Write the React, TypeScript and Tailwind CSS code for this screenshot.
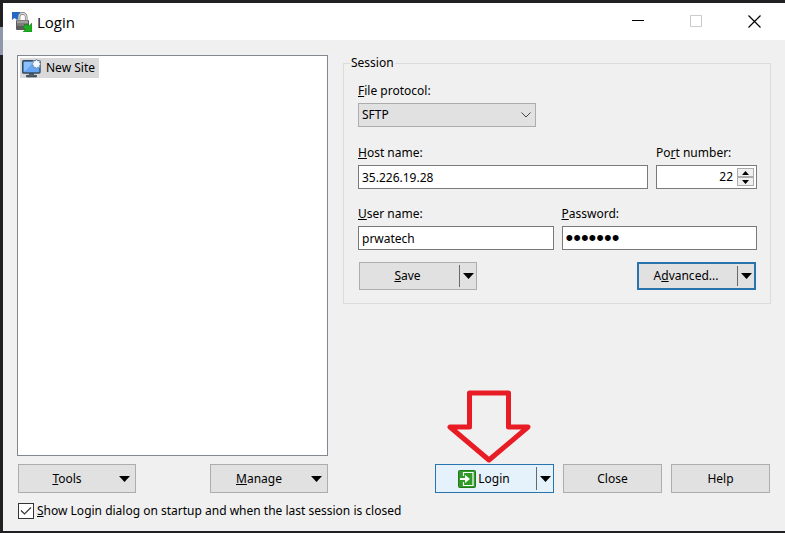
import { useState } from "react";
import type { ReactNode } from "react";

const fieldClass = "h-6 w-full border border-[#7a7a7a] bg-white px-[3px] text-black outline-none";

function Caret() {
  return (
    <svg width="11" height="6" viewBox="0 0 11 6" aria-hidden="true">
      <path d="M0 0h11L5.5 6z" fill="#000" />
    </svg>
  );
}

function Field(props: { id: string; label: ReactNode; className: string; children: ReactNode }) {
  const { id, label, className, children } = props;

  return (
    <div className={`flex min-w-0 flex-col gap-1 ${className}`}>
      <label htmlFor={id} className="h-4 leading-4 whitespace-nowrap">
        {label}
      </label>
      {children}
    </div>
  );
}

function SplitButton(props: { children: ReactNode; menuLabel: string; className: string }) {
  const { children, menuLabel, className } = props;

  return (
    <div className={`flex items-stretch ${className}`}>
      <button type="button" className="flex flex-1 items-center justify-center pr-1">
        {children}
      </button>
      <span className="my-0.5 w-px bg-[#696969]" />
      <button type="button" aria-label={menuLabel} className="flex w-4 items-center justify-center">
        <Caret />
      </button>
    </div>
  );
}

function MenuButton({ children }: { children: ReactNode }) {
  return (
    <button
      type="button"
      className="flex h-[29px] w-[118px] items-center border border-[#adadad] bg-[#e1e1e1] pr-[5px]"
    >
      <span className="flex-1 pr-1 text-center">{children}</span>
      <Caret />
    </button>
  );
}

function PushButton({ children }: { children: ReactNode }) {
  return (
    <button type="button" className="h-[29px] w-[99px] border border-[#adadad] bg-[#e1e1e1]">
      {children}
    </button>
  );
}

function AppIcon() {
  return (
    <svg width="20" height="20" viewBox="0 0 20 20" aria-hidden="true">
      <path d="M0 0h9L6.500 2.500 8 5 5 8 2.500 6 0 8z" fill="#2468c8" />
      <path d="M7 9V5a3.600 3.600 0 0 1 7.200 0v4" fill="none" stroke="#777" strokeWidth="2.600" />
      <path d="M7 9V5a3.600 3.600 0 0 1 7.200 0v4" fill="none" stroke="#ddd" strokeWidth="1.200" />
      <rect x="4" y="8" width="13" height="10" rx="1" fill="#5c5c5c" />
      <rect x="5" y="8.500" width="11" height="3" fill="#a0a0a0" />
      <rect x="5" y="11.500" width="7" height="2.500" fill="#7a7a7a" />
      <path d="M20 11v9h-9l2.500-2.500L11 15l3-3 3 2z" fill="#1fae20" stroke="#0d8710" strokeWidth=".6" />
    </svg>
  );
}

function SiteIcon() {
  return (
    <svg width="19" height="19" viewBox="0 0 19 19" aria-hidden="true">
      <rect x=".7" y="1.700" width="17.300" height="12.300" rx="1" fill="#64a4f2" stroke="#34495e" strokeWidth="1.400" />
      <path d="M2 3h10L3 12H2z" fill="#8bc0fb" />
      <path d="M7.500 14.700h4v1.600h3v1.700h-10v-1.700h3z" fill="#536170" stroke="#26323f" strokeWidth=".6" />
      <path
        d="M14.500 0l1.200 2 2.300-.5-.5 2.300 1.500 1.200-1.500 1.200.5 2.300-2.300-.5-1.200 1.500-1.200-1.500-2.300.5.5-2.300L9.500 5l2-1.200-.5-2.300 2.300.5z"
        fill="#f4f9ff"
        stroke="#6583a5"
        strokeWidth=".7"
      />
    </svg>
  );
}

function LoginIcon() {
  return (
    <svg width="18" height="18" viewBox="0 0 18 18" aria-hidden="true">
      <rect x=".5" y=".5" width="17" height="17" rx="1" fill="#319b29" stroke="#23781d" />
      <path d="M5.500 6V2.500h9.500v13H5.500V12" fill="none" stroke="#fff" strokeWidth="1.200" />
      <path d="M2 8h5V5l5 4-5 4v-3H2z" fill="#fff" />
    </svg>
  );
}

export default function App() {
  const [remember, setRemember] = useState(true);

  return (
    <div className="flex min-h-screen bg-[#202022] pt-[3px] font-['Noto_Sans',sans-serif] text-xs text-black">
      {/* Sliver of the desktop behind the window */}
      <div className="w-[3px] shrink-0 pt-6">
        <div className="h-7 bg-[#8f98aa]" />
      </div>

      <main className="mb-0.5 min-w-0 flex-1 bg-[#f0f0f0]">
        {/* Title bar */}
        <header className="flex h-[37px] items-center justify-between bg-white pr-6 pl-[9px]">
          <div className="flex items-center gap-[5px]">
            <AppIcon />
            <h1 className="font-['Open_Sans',sans-serif] text-[15px] leading-5">Login</h1>
          </div>
          <div className="flex items-center gap-[45px]">
            <button type="button" aria-label="Minimize">
              <svg width="13" height="13" viewBox="0 0 13 13">
                <path d="M0 5.500h12" stroke="#000" />
              </svg>
            </button>
            <button type="button" aria-label="Maximize" disabled>
              <svg width="13" height="13" viewBox="0 0 13 13">
                <path d="M.5 .5h11v11H.5z" fill="none" stroke="#ccc" />
              </svg>
            </button>
            <button type="button" aria-label="Close window">
              <svg width="13" height="13" viewBox="0 0 13 13">
                <path d="M.5 .5l12 12M12.500 .5l-12 12" stroke="#000" strokeWidth="1.200" />
              </svg>
            </button>
          </div>
        </header>

        <div className="px-3.5 pt-[15px] pb-3">
          <div className="flex gap-[15px]">
            {/* Sites */}
            <div className="min-w-0 flex-[311]">
              <div className="h-[401px] border border-[#828790] bg-white p-0.5">
                <button type="button" className="flex h-5 items-center gap-[5px] bg-[#d9d9d9] pr-1 pl-0.5">
                  <SiteIcon />
                  New Site
                </button>
              </div>
            </div>

            {/* Session */}
            <div className="min-w-0 flex-[428]">
              <fieldset className="min-w-0 border border-[#dcdcdc] pr-[13px] pb-[13px] pl-3.5">
                <legend className="-ml-2 h-4 px-px leading-4">Session</legend>

                <Field id="protocol" label={<><u>F</u>ile protocol:</>} className="mt-3 w-[178px]">
                  <div className="relative">
                    <select
                      id="protocol"
                      className="block h-6 w-full appearance-none border border-[#adadad] bg-[#e1e1e1] px-[3px] outline-none"
                    >
                      <option>SFTP</option>
                    </select>
                    <svg
                      className="pointer-events-none absolute top-[9px] right-[5px]"
                      width="10"
                      height="6"
                      viewBox="0 0 10 6"
                    >
                      <path d="M.5 .5L5 5 9.500 .5" fill="none" stroke="#444" />
                    </svg>
                  </div>
                </Field>

                <div className="mt-[18px] flex gap-2">
                  <Field id="host" label={<><u>H</u>ost name:</>} className="flex-1">
                    <input id="host" defaultValue="35.226.19.28" className={fieldClass} />
                  </Field>
                  <Field id="port" label={<>Po<u>r</u>t number:</>} className="w-[101px]">
                    <div className="flex h-6 border border-[#7a7a7a] bg-white p-0.5">
                      <input
                        id="port"
                        defaultValue="22"
                        className="w-full min-w-0 pr-1 text-right outline-none"
                      />
                      <div className="flex w-[17px] shrink-0 flex-col">
                        <button
                          type="button"
                          aria-label="Increase port"
                          className="flex flex-1 items-center justify-center border border-[#acacac] bg-[#f0f0f0]"
                        >
                          <svg width="7" height="4" viewBox="0 0 7 4">
                            <path d="M0 4h7L3.500 0z" />
                          </svg>
                        </button>
                        <button
                          type="button"
                          aria-label="Decrease port"
                          className="flex flex-1 items-center justify-center border border-[#acacac] bg-[#f0f0f0]"
                        >
                          <svg width="7" height="4" viewBox="0 0 7 4">
                            <path d="M0 0h7L3.500 4z" />
                          </svg>
                        </button>
                      </div>
                    </div>
                  </Field>
                </div>

                <div className="mt-[17px] flex gap-2">
                  <Field id="user" label={<><u>U</u>ser name:</>} className="flex-1">
                    <input id="user" defaultValue="prwatech" className={fieldClass} />
                  </Field>
                  <Field id="password" label={<><u>P</u>assword:</>} className="flex-1">
                    <input
                      id="password"
                      type="password"
                      defaultValue="prwaftp"
                      className={`font-['Liberation_Sans',sans-serif] text-[22px] leading-5 ${fieldClass}`}
                    />
                  </Field>
                </div>

                <div className="mt-3 flex justify-between px-px">
                  <SplitButton
                    menuLabel="Save options"
                    className="h-7 w-[118px] border border-[#adadad] bg-[#e1e1e1]"
                  >
                    <span><u>S</u>ave</span>
                  </SplitButton>
                  <SplitButton
                    menuLabel="Advanced options"
                    className="h-7 w-[119px] border-2 border-[#2a74ad] bg-[#e1e1e1]"
                  >
                    <span>A<u>d</u>vanced...</span>
                  </SplitButton>
                </div>
              </fieldset>

              {/* Arrow pointing at the login button */}
              <svg
                className="mt-[85px] -mb-2 ml-[102px]"
                width="88"
                height="74"
                viewBox="0 0 88 74"
                aria-hidden="true"
              >
                <path
                  d="M24.500 4h39v34H83L44 71 5 38h19.500z"
                  fill="none"
                  stroke="#e81c24"
                  strokeWidth="5"
                  strokeLinejoin="round"
                />
              </svg>
            </div>
          </div>

          {/* Actions */}
          <div className="mt-2 flex gap-[15px] px-px">
            <div className="flex flex-[310] justify-between">
              <MenuButton><u>T</u>ools</MenuButton>
              <MenuButton><u>M</u>anage</MenuButton>
            </div>
            <div className="flex flex-[427] justify-end gap-[9px]">
              <SplitButton
                menuLabel="Login options"
                className="h-[29px] w-[119px] border border-[#2a74ad] bg-[#e5f1fb]"
              >
                <LoginIcon />
                <span className="ml-0.5">Login</span>
              </SplitButton>
              <PushButton>Close</PushButton>
              <PushButton>Help</PushButton>
            </div>
          </div>

          <label className="mt-2.5 ml-px flex w-fit items-center gap-[3px] leading-4">
            <span className="relative flex">
              <input
                type="checkbox"
                checked={remember}
                onChange={(e) => setRemember(e.target.checked)}
                className="peer size-4 appearance-none border border-[#333] bg-white"
              />
              <svg
                className="pointer-events-none absolute inset-0 hidden peer-checked:block"
                width="16"
                height="16"
                viewBox="0 0 16 16"
              >
                <path d="M3 7.500l3.500 3.500L13 4.500" fill="none" stroke="#333" strokeWidth="1.200" />
              </svg>
            </span>
            <span><u>S</u>how Login dialog on startup and when the last session is closed</span>
          </label>
        </div>
      </main>
    </div>
  );
}
